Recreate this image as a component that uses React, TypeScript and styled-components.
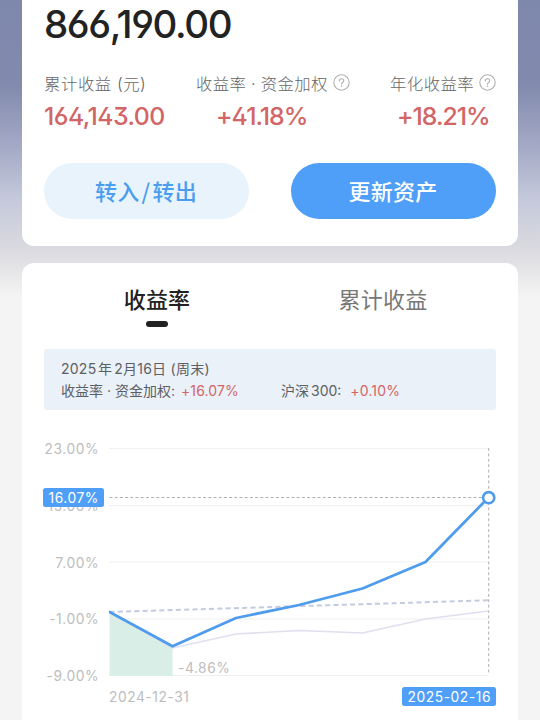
import React from "react";
import styled, { createGlobalStyle, css } from "styled-components";

const GlobalStyle = createGlobalStyle`
  * { box-sizing: border-box; }
  body { margin: 0; overflow: hidden; }
`;

const cjk = css`
  font-family: "Noto Sans CJK SC", sans-serif;
`;
const figures = css`
  font-family: Inter, "Noto Sans CJK SC", sans-serif;
  font-feature-settings: "cv03", "cv04", "ss01";
`;
const data = css`
  font-family: Inter, "Noto Sans CJK SC", sans-serif;
`;

const Screen = styled.main`
  ${cjk}
  width: 540px;
  height: 720px;
  overflow: hidden;
  display: flex;
  flex-direction: column;
  gap: 17px;
  padding: 0 22px;
  background: linear-gradient(
    180deg,
    #7e87ac 0,
    #828aae 85px,
    #a3a9c5 145px,
    #c5c9db 200px,
    #d9d9df 247px,
    #e4e4e7 268px,
    #f4f4f4 296px
  );
`;

const SummaryCard = styled.section`
  height: 246px;
  flex: none;
  padding: 0 22px;
  background: #fff;
  border-radius: 0 0 12px 12px;
`;

const Amount = styled.div`
  ${figures}
  height: 48px;
  line-height: 48px;
  font-size: 38.5px;
  font-weight: 500;
  letter-spacing: -1.4px;
  color: #222;
`;

const Stats = styled.div`
  display: grid;
  grid-template-columns: 152px 194px auto;
  padding-top: 22px;
`;

const Stat = styled.div`
  display: flex;
  flex-direction: column;
  white-space: nowrap;
`;

const StatLabel = styled.div<{ $spacing?: number }>`
  display: flex;
  align-items: center;
  height: 25px;
  font-family: Inter, "Noto Sans CJK SC", sans-serif;
  font-size: 16.4px;
  font-weight: 300;
  letter-spacing: ${(p) => p.$spacing ?? 0.45}px;
  color: #666;
`;

const StatValue = styled.div<{ $indent?: number; $spacing?: number }>`
  ${figures}
  height: 39px;
  line-height: 42px;
  padding-left: ${(p) => p.$indent ?? 0}px;
  font-size: 24.8px;
  font-weight: 500;
  letter-spacing: ${(p) => p.$spacing ?? -1}px;
  color: #d26565;
`;

const HelpSvg = styled.svg`
  width: 17px;
  height: 17px;
  margin-left: 5px;
  flex: none;
`;

const Actions = styled.div`
  display: flex;
  justify-content: space-between;
  padding-top: 29px;
`;

const ActionButton = styled.button<{ $primary?: boolean }>`
  ${cjk}
  width: 205px;
  height: 56px;
  padding: 0 1px 3px 0;
  border: 0;
  border-radius: 28px;
  font-size: 22px;
  font-weight: 500;
  letter-spacing: 0.3px;
  color: ${(p) => (p.$primary ? "#fff" : "#4b9df0")};
  background: ${(p) => (p.$primary ? "#4f9ff8" : "#e8f3fc")};
`;

const Slash = styled.span`
  margin: 0 2px;
`;

const ChartCard = styled.section`
  height: 500px;
  flex: none;
  padding: 0 22px;
  background: #fff;
  border-radius: 12px;
`;

const Tabs = styled.div`
  display: grid;
  grid-template-columns: 1fr 1fr;
  height: 86px;
  padding-top: 18px;
`;

const Tab = styled.div<{ $active?: boolean }>`
  display: flex;
  flex-direction: column;
  align-items: center;
  font-size: 22px;
  line-height: 34px;
  font-weight: ${(p) => (p.$active ? 500 : 400)};
  letter-spacing: 0.2px;
  color: ${(p) => (p.$active ? "#222" : "#777")};
`;

const Indicator = styled.span`
  width: 22px;
  height: 6px;
  margin-top: 6px;
  border-radius: 3px;
  background: #222;
`;

const Info = styled.div`
  ${data}
  height: 60.5px;
  padding: 9px 17px;
  border-radius: 3px;
  background: #ebf1f8;
  font-size: 14px;
  line-height: 22px;
  color: #5c6064;
  white-space: nowrap;
`;

const InfoRow = styled.div`
  display: flex;
`;

const InfoItem = styled.span<{ $width?: number; $gap?: number; $spacing?: number }>`
  display: flex;
  gap: ${(p) => p.$gap ?? 0}px;
  width: ${(p) => (p.$width ? `${p.$width}px` : "auto")};
  letter-spacing: ${(p) => p.$spacing ?? 0}px;
  white-space: pre;
`;

const Gain = styled.span`
  color: #d26565;
  letter-spacing: 0.15px;
`;

const Figure = styled.span<{ $before?: number }>`
  margin-left: ${(p) => p.$before ?? 0}px;
`;

const Chart = styled.div`
  ${data}
  position: relative;
  display: grid;
  grid-template-columns: 55px 1fr;
  column-gap: 10px;
  padding-top: 28.5px;
  font-size: 13.8px;
  letter-spacing: 0.55px;
  color: #bdbdbd;
`;

const Axis = styled.div`
  display: flex;
  flex-direction: column;
  align-items: flex-end;
  justify-content: space-between;
  height: 248px;
  padding-top: 1px;
  line-height: 20px;
  white-space: nowrap;
`;

const Plot = styled.svg`
  display: block;
  width: 387px;
  height: 247px;
`;

const Dates = styled.div`
  grid-column: 2;
  display: flex;
  justify-content: space-between;
  align-items: center;
  height: 21px;
`;

const Tag = styled.span`
  display: block;
  height: 19px;
  line-height: 20px;
  padding: 0 5px;
  border-radius: 2.5px;
  background: #4f9ff8;
  color: #fff;
`;

const DateTag = styled(Tag)`
  padding-left: 6px;
`;

const ValueTag = styled(Tag)`
  position: absolute;
  left: -1.5px;
  top: 78.5px;
  width: 61.5px;
  padding-left: 6px;
`;

const LowLabel = styled.span`
  position: absolute;
  left: 134px;
  top: 248px;
  line-height: 20px;
`;

const Help = () => (
  <HelpSvg viewBox="0 0 17 17" fill="none" stroke="#b0b0b0" strokeWidth="1.1">
    <circle cx="8.5" cy="8.5" r="7.7" />
    <path d="M6.3 6.9c0-1.4 1-2.2 2.2-2.2s2.2.8 2.2 2c0 1.7-2.2 1.8-2.2 3.5" strokeLinecap="round" />
    <circle cx="8.5" cy="12.2" r=".75" fill="#b0b0b0" stroke="none" />
  </HelpSvg>
);

const gridLines = [10.5, 67.5, 124, 181, 237.5];
const ticks = ["23.00%", "15.00%", "7.00%", "-1.00%", "-9.00%"];

export default function App() {
  return (
    <>
      <GlobalStyle />
      <Screen>
        <SummaryCard>
          <Amount>866,190.00</Amount>
          <Stats>
            <Stat>
              <StatLabel $spacing={0.55}>累计收益 (元)</StatLabel>
              <StatValue $spacing={-0.55}>164,143.00</StatValue>
            </Stat>
            <Stat>
              <StatLabel $spacing={0.3}>收益率 · 资金加权<Help /></StatLabel>
              <StatValue $indent={20}>+41.18%</StatValue>
            </Stat>
            <Stat>
              <StatLabel>年化收益率<Help /></StatLabel>
              <StatValue $indent={7}>+18.21%</StatValue>
            </Stat>
          </Stats>
          <Actions>
            <ActionButton>转入<Slash>/</Slash>转出</ActionButton>
            <ActionButton $primary>更新资产</ActionButton>
          </Actions>
        </SummaryCard>
        <ChartCard>
          <Tabs>
            <Tab $active>收益率<Indicator /></Tab>
            <Tab>累计收益</Tab>
          </Tabs>
          <Info>
            <InfoRow>
              <InfoItem $spacing={0.25}>
                2025<Figure $before={1.5}>年</Figure><Figure $before={2}>2</Figure>月16日 (周末)
              </InfoItem>
            </InfoRow>
            <InfoRow>
              <InfoItem $width={220} $gap={2}>收益率 · 资金加权: <Gain>+16.07%</Gain></InfoItem>
              <InfoItem $gap={9}><span>沪深<Figure $before={2}>300:</Figure></span><Gain>+0.10%</Gain></InfoItem>
            </InfoRow>
          </Info>
          <Chart>
            <Axis>
              {ticks.map((t) => <span key={t}>{t}</span>)}
            </Axis>
            <Plot viewBox="109 438 387 247" fill="none">
              {gridLines.map((y) => (
                <path key={y} d={`M109.5 ${y + 438}H488.5`} stroke="#efefef" />
              ))}
              <path d="M109.5 612L172.5 646.5V676H109.5Z" fill="#d9eee6" />
              <path d="M109.5 497.5H482" stroke="#b0b0b0" strokeDasharray="3 2.2" />
              <path d="M488.7 448V673" stroke="#b0b0b0" strokeDasharray="3 2.4" />
              <path d="M109.5 612L172.5 648L236 634L299 630.5L362.5 633L425.5 619L488.5 611" stroke="#dfdff0" strokeWidth="1.6" />
              <path d="M109.5 612L488.5 600.3" stroke="#c3cbe0" strokeWidth="2" strokeDasharray="5 3.3" />
              <path d="M109.5 612L172.5 646.3L236 618L299 605L362.5 588.5L425.5 562L488.5 497.5" stroke="#4f9cee" strokeWidth="2.8" strokeLinejoin="round" strokeLinecap="round" />
              <circle cx="488.7" cy="497.7" r="5.6" fill="#fff" stroke="#4f9cee" strokeWidth="2.6" />
            </Plot>
            <Dates>
              <span>2024-12-31</span>
              <DateTag>2025-02-16</DateTag>
            </Dates>
            <ValueTag>16.07%</ValueTag>
            <LowLabel>-4.86%</LowLabel>
          </Chart>
        </ChartCard>
      </Screen>
    </>
  );
}
